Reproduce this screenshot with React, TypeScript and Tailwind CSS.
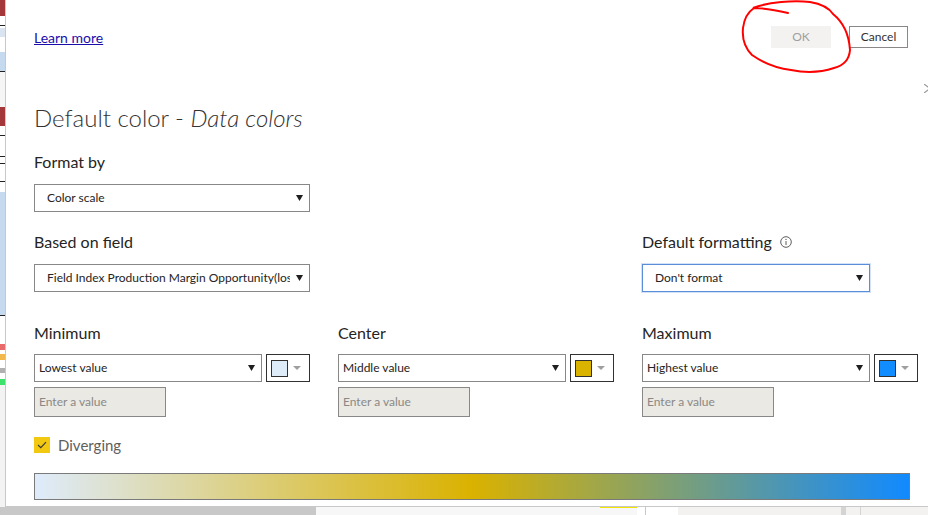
import React from "react";

const font = { fontFamily: '"Segoe UI", Lato, "Liberation Sans", sans-serif' };

function Arrow() {
  return (
    <svg width="7" height="6" viewBox="0 0 7 6" className="shrink-0">
      <path d="M0 0 L7 0 L3.5 6 Z" fill="#1f1f1f" />
    </svg>
  );
}

function Select({ text, width, padLeft, focus }: { text: string; width: string; padLeft: string; focus?: boolean }) {
  return (
    <div
      className={`flex h-[28px] ${width} items-center border bg-white pr-[6px] ${padLeft} ${
        focus ? "border-[#5b8ed8] shadow-[0_0_0_1px_#d3e2f6]" : "border-[#8a8886]"
      }`}
    >
      <span className="mr-[6px] min-w-0 flex-1 overflow-hidden whitespace-nowrap text-[12px] text-[#252423]">
        {text}
      </span>
      <Arrow />
    </div>
  );
}

function ColorPicker({ color }: { color: string }) {
  return (
    <div className="flex h-[28px] w-[44px] items-center gap-[5px] border border-[#323130] bg-white pl-[4px]">
      <div className="h-[17px] w-[17px] border border-[#323130]" style={{ backgroundColor: color }} />
      <svg width="8" height="4" viewBox="0 0 8 4">
        <path d="M0 0 L8 0 L4 4 Z" fill="#a19f9d" />
      </svg>
    </div>
  );
}

function ValueColumn({ label, value, color }: { label: string; value: string; color: string }) {
  return (
    <div className="flex w-[276px] flex-col">
      <div className="h-[20px] text-[16px] leading-[20px] text-[#252423]">{label}</div>
      <div className="mt-[11px] flex gap-[4px]">
        <Select text={value} width="w-[228px]" padLeft="pl-[4px]" />
        <ColorPicker color={color} />
      </div>
      <div className="mt-[5px] flex h-[30px] w-[132px] items-center border border-[#8a8886] bg-[#ebe9e3] pl-[4px] text-[12px] text-[#8a8886]">
        Enter a value
      </div>
    </div>
  );
}

function LeftStrip() {
  return (
    <div className="flex w-[5px] shrink-0 flex-col bg-white">
      <div className="h-[16px] bg-[#a4373a]" />
      <div className="h-[9px]" />
      <div className="h-[1px] bg-[#222]" />
      <div className="h-[2px]" />
      <div className="h-[9px] bg-[#d9e4f0]" />
      <div className="h-[15px]" />
      <div className="h-[19px] bg-[#c5d9ef]" />
      <div className="h-[1px] bg-[#222]" />
      <div className="h-[35px] bg-[#f5f5f5]" />
      <div className="h-[19px] bg-[#a4373a]" />
      <div className="h-[9px]" />
      <div className="h-[1px] bg-[#222]" />
      <div className="h-[20px]" />
      <div className="h-[1px] bg-[#222]" />
      <div className="h-[6px]" />
      <div className="h-[1px] bg-[#222]" />
      <div className="h-[17px]" />
      <div className="h-[1px] bg-[#222]" />
      <div className="h-[10px]" />
      <div className="h-[123px] bg-[#c5d9ef]" />
      <div className="h-[1px] bg-[#222]" />
      <div className="h-[28px]" />
      <div className="h-[6px] bg-[#e86a6a]" />
      <div className="h-[4px]" />
      <div className="h-[6px] bg-[#f2b84b]" />
      <div className="h-[8px]" />
      <div className="h-[5px] bg-[#b0b0b0]" />
      <div className="h-[6px]" />
      <div className="h-[6px] bg-[#3ee26a]" />
      <div className="flex-1 bg-[#f3f3f3]" />
    </div>
  );
}

export default function App() {
  return (
    <div className="flex h-[515px] w-[928px] flex-col overflow-hidden bg-white" style={font}>
      <div className="flex h-[507px] shrink-0">
        <LeftStrip />
        <div className="relative flex flex-1 flex-col border-b border-l border-[#c8c8c8] pl-[28px]">
          {/* header */}
          <div className="flex h-[48px] items-start justify-between pr-[20px] pt-[26px]">
            <a href="#" className="mt-[4px] text-[14px] leading-[16px] text-[#1a0dab] underline">
              Learn more
            </a>
            <div className="flex gap-[18px]">
              <div className="flex h-[22px] w-[60px] items-center justify-center bg-[#f3f2f1] text-[12px] text-[#a19f9d]">
                OK
              </div>
              <div className="flex h-[22px] w-[59px] items-center justify-center border border-[#8a8886] text-[12px] text-[#323130]">
                Cancel
              </div>
            </div>
          </div>

          {/* red annotation circle */}
          <svg className="absolute left-[730px] top-0" width="124" height="80" viewBox="0 0 124 80" fill="none">
            <path
              d="M52 13 C40 10 28 8 17 8 C32 2 58 0 74 2 C86 4 93 8 97 14 C107 22 113 35 114 50 C113 62 106 66 98 68 C86 72 70 73 55 70 C40 68 26 62 16 55 C9 48 6 38 7 28 C8 20 12 12 18 8"
              stroke="#ff0000"
              strokeWidth="2"
              strokeLinecap="round"
            />
          </svg>

          {/* partially visible close icon */}
          <svg className="absolute left-[918px] top-[84px]" width="6" height="9" viewBox="0 0 6 9">
            <path d="M0 0 L6 4.5 M0 9 L6 4.5" stroke="#9a9a9a" strokeWidth="1.2" />
          </svg>

          <div className="mt-[54px] h-[32px] text-[24px] font-light leading-[32px] text-[#333333]">
            Default color - <span className="italic">Data colors</span>
          </div>

          <div className="mt-[18px] h-[20px] text-[16px] leading-[20px] text-[#252423]">Format by</div>
          <div className="mt-[12px]">
            <Select text="Color scale" width="w-[276px]" padLeft="pl-[12px]" />
          </div>

          <div className="mt-[20px] flex">
            <div className="flex w-[608px] flex-col">
              <div className="h-[20px] text-[16px] leading-[20px] text-[#252423]">Based on field</div>
              <div className="mt-[12px]">
                <Select
                  text="Field Index Production Margin Opportunity(loss)"
                  width="w-[276px]"
                  padLeft="pl-[12px]"
                />
              </div>
            </div>
            <div className="flex flex-col">
              <div className="flex h-[20px] items-center gap-[8px] text-[16px] leading-[20px] text-[#252423]">
                Default formatting
                <svg width="12" height="12" viewBox="0 0 12 12">
                  <circle cx="6" cy="6" r="5.3" fill="none" stroke="#605e5c" strokeWidth="1" />
                  <path d="M6 5 L6 9" stroke="#605e5c" strokeWidth="1" />
                  <circle cx="6" cy="3.4" r="0.7" fill="#605e5c" />
                </svg>
              </div>
              <div className="mt-[12px]">
                <Select text="Don't format" width="w-[228px]" padLeft="pl-[12px]" focus />
              </div>
            </div>
          </div>

          <div className="mt-[31px] flex gap-[28px]">
            <ValueColumn label="Minimum" value="Lowest value" color="#deecf9" />
            <ValueColumn label="Center" value="Middle value" color="#dab200" />
            <ValueColumn label="Maximum" value="Highest value" color="#118dff" />
          </div>

          <div className="mt-[18px] flex items-center gap-[8px]">
            <div className="flex h-[16px] w-[16px] items-center justify-center bg-[#f2c811]">
              <svg width="10" height="8" viewBox="0 0 10 8">
                <path d="M1 4 L3.8 6.6 L9 1.2" fill="none" stroke="#3b3a39" strokeWidth="1.2" />
              </svg>
            </div>
            <span className="text-[15px] leading-[20px] text-[#605e5c]">Diverging</span>
          </div>

          <div className="mt-[18px] h-[27px] w-[876px] border border-[#7a7a7a] bg-[linear-gradient(to_right,#deebfb,#dab200,#118aff)]" />
        </div>
      </div>

      {/* bottom strip of the report behind */}
      <div className="flex h-[8px] shrink-0">
        <div className="w-[316px] bg-[#c8c8c8]" />
        <div className="w-[284px] bg-[#f7f7f7]" />
        <div className="w-[37px] border-t border-[#f5e600] bg-[#f7f7f7]" />
        <div className="w-[8px] bg-white" />
        <div className="w-[33px] border-l border-[#c8c8c8] bg-white" />
        <div className="w-[163px] bg-[#f3f2f1]" />
        <div className="w-[5px] bg-[#d4d4d4]" />
        <div className="w-[14px] bg-[#f3f2f1]" />
        <div className="flex-1 border-l border-[#d4d4d4] bg-[#f3f2f1]" />
      </div>
    </div>
  );
}
